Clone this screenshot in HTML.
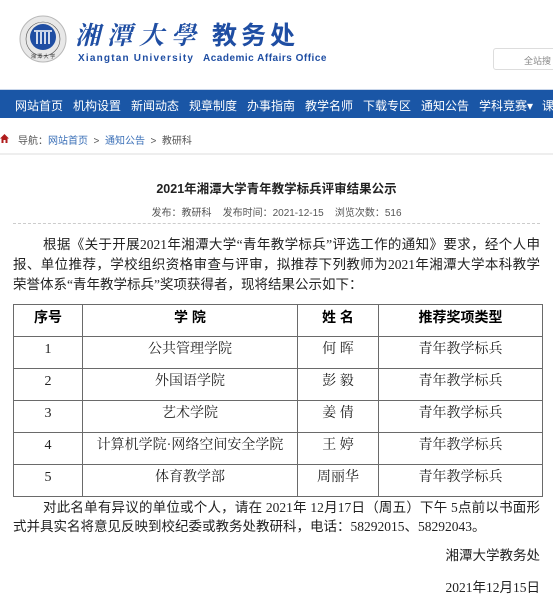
<!DOCTYPE html>
<html><head><meta charset="utf-8">
<style>
*{margin:0;padding:0;box-sizing:border-box}
body{width:553px;height:602px;overflow:hidden;background:#fff;font-family:"Liberation Sans","Noto Sans CJK SC",sans-serif;position:relative}
.abs{position:absolute;white-space:nowrap}
.nav{position:absolute;left:0;top:89px;width:553px;height:29px;background:#1a56a6;border-top:1px solid #c9d6ea}
.nav span{position:absolute;top:7px;color:#fff;font-size:12px}
table{position:absolute;left:13px;top:304px;width:530px;border-collapse:collapse;font-family:"Liberation Serif","Noto Serif CJK SC","Noto Sans CJK SC",serif}
td{border:1px solid #6a6a6a;height:32px;vertical-align:top;text-align:center;font-size:14px;color:#222;padding-top:4px;line-height:18px}
th{border:1px solid #6a6a6a;height:32px;vertical-align:top;font-size:14px;padding-top:3px;font-family:"Liberation Sans","Noto Sans CJK SC",sans-serif;line-height:18px}
.l{position:absolute;left:13px;width:527px;font-size:13.5px;line-height:20px;height:20px;color:#222;font-family:"Liberation Serif","Noto Sans CJK SC",serif;white-space:nowrap;text-align:justify;text-align-last:justify}
</style></head><body>
<svg class="abs" style="left:19px;top:15px" width="48" height="48" viewBox="0 0 48 48">
<circle cx="24" cy="24" r="23" fill="#e8e8e8" stroke="#b8b8b8"/>
<circle cx="24" cy="24" r="17" fill="none" stroke="#555" stroke-width="0.6"/>
<circle cx="24" cy="22" r="13" fill="#1f4ea3"/>
<g stroke="#fff" stroke-width="1.6"><line x1="18" y1="17" x2="18" y2="29"/><line x1="22" y1="17" x2="22" y2="29"/><line x1="26" y1="17" x2="26" y2="29"/><line x1="30" y1="17" x2="30" y2="29"/><line x1="15" y1="16" x2="33" y2="16"/></g>
<text x="24" y="43" font-size="5" text-anchor="middle" fill="#333">湘 潭 大 学</text>
</svg>
<div class="abs" style="left:75px;top:18px;font-size:25px;line-height:32px;color:#1f4ea3;font-family:'Noto Serif CJK SC',serif;font-weight:bold;letter-spacing:7px;font-style:italic">湘潭大學</div>
<div class="abs" style="left:212px;top:18px;font-size:25px;line-height:32px;color:#1f4ea3;font-family:'Noto Sans CJK SC',sans-serif;font-weight:bold;letter-spacing:4px">教务处</div>
<div class="abs" style="left:78px;top:53px;font-size:10px;line-height:11px;color:#1f4ea3;font-weight:bold;letter-spacing:1.2px">Xiangtan University</div>
<div class="abs" style="left:203px;top:53px;font-size:10px;line-height:11px;color:#1f4ea3;font-weight:bold;letter-spacing:0.5px">Academic Affairs Office</div>
<div class="abs" style="left:493px;top:48px;width:70px;height:22px;border:1px solid #ddd;border-radius:3px;font-size:9px;color:#888"><span style="position:absolute;left:30px;top:5px">全站搜</span></div>
<div class="nav">
<span style="left:15px">网站首页</span><span style="left:73px">机构设置</span><span style="left:131px">新闻动态</span><span style="left:189px">规章制度</span><span style="left:247px">办事指南</span><span style="left:305px">教学名师</span><span style="left:363px">下载专区</span><span style="left:421px">通知公告</span><span style="left:479px">学科竞赛▾</span><span style="left:542px">课</span>
</div>
<svg class="abs" style="left:0;top:134px" width="9" height="9" viewBox="0 0 9 9"><path d="M4.5 0L9 4.5H7.5V9H5.5V6H3.5V9H1.5V4.5H0Z" fill="#b01c1c"/></svg>
<div class="abs" style="left:18px;top:132px;font-size:10px;color:#555">导航：<span style="color:#3a6fb7">网站首页</span> &nbsp;&gt;&nbsp; <span style="color:#3a6fb7">通知公告</span> &nbsp;&gt;&nbsp; 教研科</div>
<div class="abs" style="left:0;top:153px;width:553px;height:2px;background:#eee"></div>
<div class="abs" style="left:0;top:178px;width:553px;text-align:center;font-size:12.5px;font-weight:bold;color:#222">2021年湘潭大学青年教学标兵评审结果公示</div>
<div class="abs" style="left:0;top:204px;width:553px;text-align:center;font-size:10px;color:#555">发布：教研科 &nbsp; &nbsp;发布时间：2021-12-15 &nbsp; &nbsp;浏览次数：516</div>
<div class="abs" style="left:13px;top:223px;width:527px;border-top:1px dashed #ccc"></div>
<div class="l" style="top:235px;left:43px;width:497px">根据《关于开展2021年湘潭大学“青年教学标兵”评选工作的通知》要求，经个人申</div>
<div class="l" style="top:255px">报、单位推荐，学校组织资格审查与评审，拟推荐下列教师为2021年湘潭大学本科教学</div>
<div class="l" style="top:275px;text-align-last:left">荣誉体系“青年教学标兵”奖项获得者，现将结果公示如下：</div>
<table>
<tr><th style="width:69px">序号</th><th style="width:215px">学 院</th><th style="width:81px">姓 名</th><th>推荐奖项类型</th></tr>
<tr><td>1</td><td>公共管理学院</td><td>何 晖</td><td>青年教学标兵</td></tr>
<tr><td>2</td><td>外国语学院</td><td>彭 毅</td><td>青年教学标兵</td></tr>
<tr><td>3</td><td>艺术学院</td><td>姜 倩</td><td>青年教学标兵</td></tr>
<tr><td>4</td><td>计算机学院·网络空间安全学院</td><td>王 婷</td><td>青年教学标兵</td></tr>
<tr><td>5</td><td>体育教学部</td><td>周丽华</td><td>青年教学标兵</td></tr>
</table>
<div class="l" style="top:498px;left:43px;width:497px">对此名单有异议的单位或个人，请在 2021年 12月17日（周五）下午 5点前以书面形</div>
<div class="l" style="top:517px;text-align-last:left">式并具实名将意见反映到校纪委或教务处教研科，电话：58292015、58292043。</div>
<div class="l" style="top:546px;text-align:right;text-align-last:right">湘潭大学教务处</div>
<div class="l" style="top:578px;text-align:right;text-align-last:right">2021年12月15日</div>
</body></html>
